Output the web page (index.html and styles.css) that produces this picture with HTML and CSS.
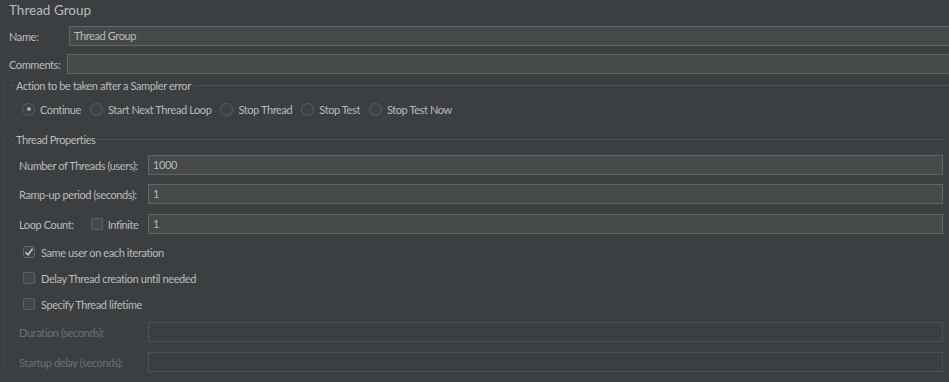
FILE: index.html
```html
<!DOCTYPE html>
<html lang="en">
<head>
    <meta charset="UTF-8">
    <title>Thread Group</title>
    <link rel="stylesheet" href="styles.css">
</head>
<body>
    <div class="panel">
        <div class="title">Thread Group</div>

        <div class="row name-row">
            <span class="label">Name:</span>
            <div class="field open">Thread Group</div>
        </div>
        <div class="row comments-row">
            <span class="label">Comments:</span>
            <div class="field open"></div>
        </div>

        <!-- Sampler error -->
        <div class="group">
            <div class="group-title">Action to be taken after a Sampler error</div>
            <div class="radios">
                <label class="radio checked"><span class="dot"></span>Continue</label>
                <label class="radio"><span class="dot"></span>Start Next Thread Loop</label>
                <label class="radio"><span class="dot"></span>Stop Thread</label>
                <label class="radio"><span class="dot"></span>Stop Test</label>
                <label class="radio"><span class="dot"></span>Stop Test Now</label>
            </div>
        </div>

        <!-- Thread properties -->
        <div class="group props">
            <div class="group-title">Thread Properties</div>

            <div class="prop-row first">
                <span class="prop-label">Number of Threads (users):</span>
                <div class="field">1000</div>
            </div>
            <div class="prop-row">
                <span class="prop-label">Ramp-up period (seconds):</span>
                <div class="field">1</div>
            </div>
            <div class="prop-row loop">
                <span class="prop-label loop-label">
                    Loop Count:
                    <span class="check"></span>
                    <span>Infinite</span>
                </span>
                <div class="field">1</div>
            </div>

            <div class="check-row first-check">
                <span class="check checked">
                    <svg width="10" height="10" viewBox="0 0 10 10"><path d="M1.5 5.2 L4 7.8 L8.6 1.8" fill="none" stroke="#c8c8c8" stroke-width="1.5"/></svg>
                </span>
                Same user on each iteration
            </div>
            <div class="check-row">
                <span class="check"></span>
                Delay Thread creation until needed
            </div>
            <div class="check-row">
                <span class="check"></span>
                Specify Thread lifetime
            </div>

            <div class="prop-row disabled duration">
                <span class="prop-label">Duration (seconds):</span>
                <div class="field"></div>
            </div>
            <div class="prop-row disabled startup">
                <span class="prop-label">Startup delay (seconds):</span>
                <div class="field"></div>
            </div>
        </div>
    </div>
</body>
</html>
```

FILE: styles.css
```css
* {
    margin: 0;
    padding: 0;
    box-sizing: border-box;
}

body {
    background: #3c3f41;
    color: #bbbbbb;
    font-family: 'Lato', 'Open Sans', sans-serif;
    font-size: 11px;
    letter-spacing: -0.4px;
    overflow: hidden;
    height: 382px;
}

/* Title */
.title {
    height: 20px;
    line-height: 20px;
    padding-left: 9px;
    font-size: 13.5px;
    letter-spacing: 0;
}

/* Name / Comments */
.row {
    display: flex;
    align-items: center;
    height: 20px;
    padding-left: 9px;
}

.name-row {
    margin-top: 6px;
}

.comments-row {
    margin-top: 8px;
}

.name-row .label {
    width: 60px;
}

.comments-row .label {
    width: 58px;
}

.field {
    flex: 1;
    height: 20px;
    line-height: 18px;
    padding-left: 4px;
    background: #45494a;
    border: 1px solid #646464;
    color: #bbbbbb;
}

.field.open {
    border-right: none;
}

/* Titled groups */
.group {
    border-left: 1px solid #434648;
    margin-left: 3px;
}

.group-title {
    display: flex;
    align-items: center;
    height: 14px;
    margin-top: 4px;
    margin-left: 6px;
}

.group-title::before {
    content: "";
    width: 3px;
    height: 1px;
    background: #505355;
    margin-right: 3px;
}

.group-title::after {
    content: "";
    flex: 1;
    height: 1px;
    background: #505355;
    margin-left: 3px;
}

.props .group-title {
    margin-top: 13px;
}

/* Radios */
.radios {
    display: flex;
    align-items: center;
    height: 20px;
    margin-top: 7px;
    padding-left: 18px;
}

.radio {
    display: flex;
    align-items: center;
    margin-right: 9px;
}

.radio .dot {
    width: 13px;
    height: 13px;
    border-radius: 50%;
    border: 1px solid #5c5f61;
    background: #3f4244;
    margin-right: 5px;
    display: flex;
    align-items: center;
    justify-content: center;
}

.radio.checked .dot::after {
    content: "";
    width: 4px;
    height: 4px;
    border-radius: 50%;
    background: #a9a9a9;
}

/* Property rows */
.props {
    padding-right: 6px;
}

.prop-row {
    display: flex;
    align-items: center;
    height: 20px;
    margin-top: 9px;
    padding-left: 15px;
}

.prop-row.loop {
    margin-top: 10px;
}

.prop-row.duration {
    margin-top: 5px;
}

.prop-row.startup {
    margin-top: 10px;
}

.prop-label {
    width: 129px;
    flex-shrink: 0;
    white-space: nowrap;
}

.loop-label {
    display: flex;
    align-items: center;
}

.loop-label .check {
    margin-left: 17px;
    margin-right: 5px;
}

.prop-row.disabled .prop-label {
    color: #6e7072;
}

.prop-row.disabled .field {
    background: #3c3f41;
    border-color: #4f5254;
}

/* Checkboxes */
.check {
    width: 12px;
    height: 12px;
    border: 1px solid #5f6264;
    border-radius: 2px;
    background: #43474a;
    display: inline-flex;
    align-items: center;
    justify-content: center;
}

.check-row {
    display: flex;
    align-items: center;
    height: 26px;
    padding-left: 19px;
}

.check-row.first-check {
    margin-top: 5px;
}

.check-row .check {
    margin-right: 6px;
}
```
